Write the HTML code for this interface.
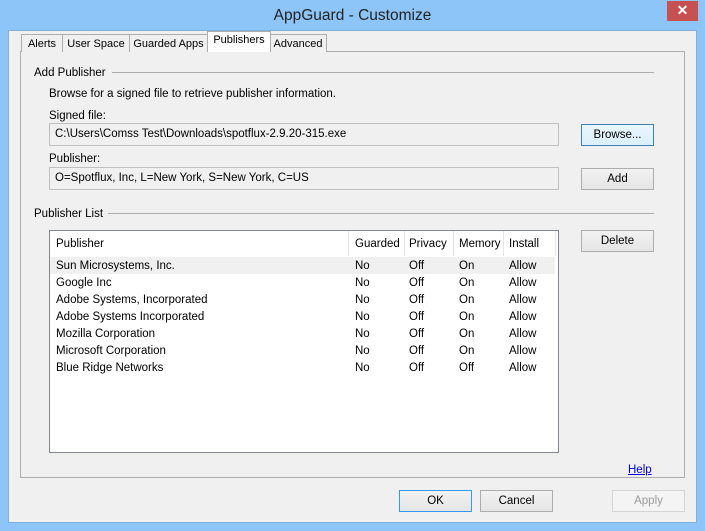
<!DOCTYPE html>
<html><head><style>
*{margin:0;padding:0;box-sizing:border-box}
body{width:705px;height:531px;background:#8dc5f8;font-family:"Liberation Sans",sans-serif;font-size:11.5px;color:#000;position:relative;overflow:hidden}
.a{position:absolute}
.title{left:0;top:7px;width:705px;text-align:center;font-size:15.5px;color:#222}
.close{left:667px;top:1px;width:31px;height:20px;background:#c75050;color:#fff;text-align:center;font-size:14px;font-weight:bold;line-height:19px}
.client{left:8px;top:30px;width:689px;height:493px;background:#f0f0f0;border:1px solid #7fb0e0}
.panel{left:20px;top:51px;width:665px;height:427px;border:1px solid #adadad;background:#fff}
.panel2{left:21px;top:52px;width:663px;height:425px;background:#f0f0f0}
.tab{top:34px;height:18px;border:1px solid #adadad;border-bottom:none;background:#f0f0f0;padding-top:3px;text-align:center;white-space:nowrap;font-size:11px}
.tab.sel{top:31px;height:21px;background:#fff;padding-top:2px}
.line{height:1px;background:#adadad}
.inp{left:49px;width:510px;height:23px;border:1px solid #c0c0c0;background:#f0f0f0;padding:4px 5px}
.btn{width:73px;height:22px;border:1px solid #adadad;background:linear-gradient(#f2f2f2,#e5e5e5);text-align:center;line-height:21px}
.list{left:49px;top:230px;width:510px;height:223px;border:1px solid #828790;background:#fff}
.hd{top:1px;height:25px;line-height:25px}
.sep{top:0;width:1px;height:25px;background:#e5e5e5}
.r{left:0;width:505px;height:17px;line-height:19px}
</style></head><body>
<div class="a title">AppGuard - Customize</div>
<div class="a close">✕</div>
<div class="a client"></div>
<div class="a panel"></div>
<div class="a panel2"></div>
<div class="a tab" style="left:21px;width:42px">Alerts</div>
<div class="a tab" style="left:62px;width:68px">User Space</div>
<div class="a tab" style="left:129px;width:79px">Guarded Apps</div>
<div class="a tab" style="left:269px;width:58px">Advanced</div>
<div class="a tab sel" style="left:207px;width:64px">Publishers</div>

<div class="a" style="left:34px;top:67px">Add Publisher</div>
<div class="a line" style="left:112px;top:72px;width:542px"></div>
<div class="a" style="left:49px;top:88px">Browse for a signed file to retrieve publisher information.</div>
<div class="a" style="left:49px;top:110px">Signed file:</div>
<div class="a inp" style="top:123px">C:\Users\Comss Test\Downloads\spotflux-2.9.20-315.exe</div>
<div class="a" style="left:49px;top:153px">Publisher:</div>
<div class="a inp" style="top:167px">O=Spotflux, Inc, L=New York, S=New York, C=US</div>
<div class="a btn" style="left:581px;top:124px;border-color:#3c7fb1;background:linear-gradient(#eaf6fd,#d9f0fc)">Browse...</div>
<div class="a btn" style="left:581px;top:168px">Add</div>
<div class="a" style="left:34px;top:208px">Publisher List</div>
<div class="a line" style="left:108px;top:213px;width:546px"></div>
<div class="a btn" style="left:581px;top:230px">Delete</div>

<div class="a list">
<div class="a hd" style="left:6px">Publisher</div>
<div class="a sep" style="left:298px"></div>
<div class="a hd" style="left:305px">Guarded</div>
<div class="a sep" style="left:354px"></div>
<div class="a hd" style="left:359px">Privacy</div>
<div class="a sep" style="left:403px"></div>
<div class="a hd" style="left:409px">Memory</div>
<div class="a sep" style="left:453px"></div>
<div class="a hd" style="left:459px">Install</div>
<div class="a sep" style="left:505px"></div>
<div class="a r" style="top:26px;background:#f0f0f0"><span class="a" style="left:6px">Sun Microsystems, Inc.</span><span class="a" style="left:305px">No</span><span class="a" style="left:359px">Off</span><span class="a" style="left:409px">On</span><span class="a" style="left:459px">Allow</span></div>
<div class="a r" style="top:43px"><span class="a" style="left:6px">Google Inc</span><span class="a" style="left:305px">No</span><span class="a" style="left:359px">Off</span><span class="a" style="left:409px">On</span><span class="a" style="left:459px">Allow</span></div>
<div class="a r" style="top:60px"><span class="a" style="left:6px">Adobe Systems, Incorporated</span><span class="a" style="left:305px">No</span><span class="a" style="left:359px">Off</span><span class="a" style="left:409px">On</span><span class="a" style="left:459px">Allow</span></div>
<div class="a r" style="top:77px"><span class="a" style="left:6px">Adobe Systems Incorporated</span><span class="a" style="left:305px">No</span><span class="a" style="left:359px">Off</span><span class="a" style="left:409px">On</span><span class="a" style="left:459px">Allow</span></div>
<div class="a r" style="top:94px"><span class="a" style="left:6px">Mozilla Corporation</span><span class="a" style="left:305px">No</span><span class="a" style="left:359px">Off</span><span class="a" style="left:409px">On</span><span class="a" style="left:459px">Allow</span></div>
<div class="a r" style="top:111px"><span class="a" style="left:6px">Microsoft Corporation</span><span class="a" style="left:305px">No</span><span class="a" style="left:359px">Off</span><span class="a" style="left:409px">On</span><span class="a" style="left:459px">Allow</span></div>
<div class="a r" style="top:128px"><span class="a" style="left:6px">Blue Ridge Networks</span><span class="a" style="left:305px">No</span><span class="a" style="left:359px">Off</span><span class="a" style="left:409px">Off</span><span class="a" style="left:459px">Allow</span></div>
</div>

<div class="a" style="left:628px;top:464px;color:#0000ee;text-decoration:underline">Help</div>
<div class="a btn" style="left:399px;top:490px;border-color:#3399ff">OK</div>
<div class="a btn" style="left:480px;top:490px">Cancel</div>
<div class="a btn" style="left:612px;top:490px;background:#f4f4f4;border-color:#d5d5d5;color:#9a9a9a">Apply</div>
</body></html>
